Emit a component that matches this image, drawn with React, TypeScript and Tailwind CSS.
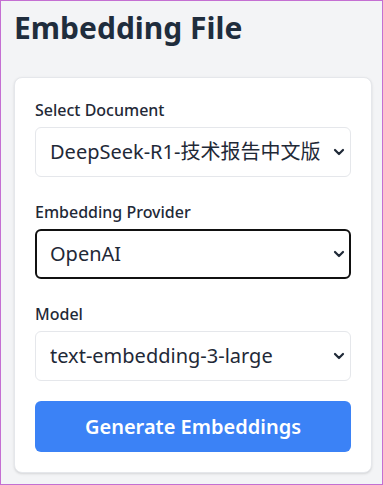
import React, { useState } from "react";

function Chevron() {
  return (
    <svg
      className="pointer-events-none absolute right-[6px] top-1/2 -translate-y-1/2"
      width="12"
      height="8"
      viewBox="0 0 12 8"
      fill="none"
    >
      <path d="M2 2l4 4 4-4" stroke="#1f2937" strokeWidth="2.2" strokeLinecap="round" strokeLinejoin="round" />
    </svg>
  );
}

function Field({
  label,
  value,
  options,
  focused,
  onChange,
}: {
  label: string;
  value: string;
  options: string[];
  focused?: boolean;
  onChange: (v: string) => void;
}) {
  return (
    <div className="flex flex-col">
      <label className="mb-[5px] text-base leading-6 font-medium text-[#1f2937]">{label}</label>
      <div className="relative">
        <select
          value={value}
          onChange={(e) => onChange(e.target.value)}
          className={
            focused
              ? "h-[50px] w-full appearance-none overflow-hidden rounded-md border-2 border-[#111111] bg-white pl-[13px] pr-[30px] text-xl text-[#1f2937] outline-none"
              : "h-[50px] w-full appearance-none overflow-hidden rounded-md border border-[#e5e7eb] bg-white pl-[14px] pr-[30px] text-xl text-[#1f2937] outline-none"
          }
        >
          {options.map((o) => (
            <option key={o} value={o}>
              {o}
            </option>
          ))}
        </select>
        <Chevron />
      </div>
    </div>
  );
}

export default function App() {
  const [doc, setDoc] = useState("DeepSeek-R1-技术报告中文版.pdf");
  const [provider, setProvider] = useState("OpenAI");
  const [model, setModel] = useState("text-embedding-3-large");

  return (
    <div
      className="h-[485px] overflow-hidden border border-[#c46fd2] bg-[#f3f4f6] pl-[13px] pr-[10px] text-[#1f2937]"
      style={{ fontFamily: '"Noto Sans", "Noto Sans CJK SC", sans-serif' }}
    >
      <h1 className="mt-[9px] mb-[31px] text-3xl leading-9 font-bold text-[#1f2d3d]">Embedding File</h1>
      <div className="rounded-lg border border-[#e5e7eb] bg-white p-5 shadow-sm">
        <div className="flex flex-col gap-[23px]">
          <Field
            label="Select Document"
            value={doc}
            options={["DeepSeek-R1-技术报告中文版.pdf"]}
            onChange={setDoc}
          />
          <Field
            label="Embedding Provider"
            value={provider}
            options={["OpenAI", "Ollama"]}
            focused
            onChange={setProvider}
          />
          <Field
            label="Model"
            value={model}
            options={["text-embedding-3-large", "text-embedding-3-small"]}
            onChange={setModel}
          />
        </div>
        <button className="mt-5 h-[51px] w-full rounded-md bg-[#3b82f6] text-xl font-semibold text-white">
          Generate Embeddings
        </button>
      </div>
    </div>
  );
}
